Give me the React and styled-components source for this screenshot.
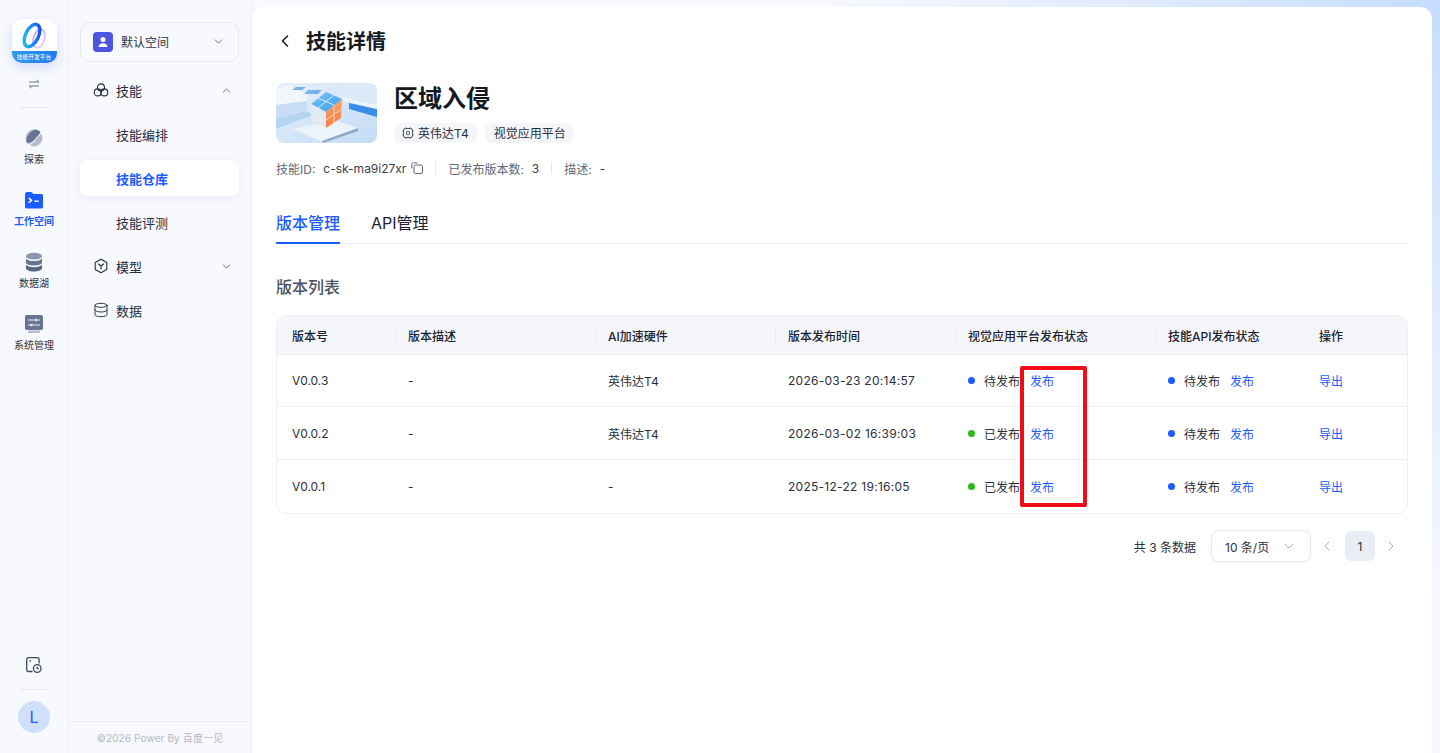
import React from 'react';
import styled, { createGlobalStyle } from 'styled-components';
import { LuChevronLeft, LuChevronDown, LuChevronUp, LuChevronRight, LuDatabase } from 'react-icons/lu';

const GlobalStyle = createGlobalStyle`
  html, body, #root { margin: 0; height: 100%; }
  body {
    font-family: Inter, "Noto Sans CJK SC", sans-serif;
    color: #1c2230;
    overflow: hidden;
    background: #f8f9fe;
  }
  * { box-sizing: border-box; }
`;

const Page = styled.div`
  display: flex;
  height: 753px;
  width: 1440px;
  background: radial-gradient(ellipse 620px 620px at 100% 0, #c6ddfe 0%, #d9e7fd 35%, #f8f9fe 100%);
`;

const Rail = styled.nav`
  width: 69px;
  flex: none;
  display: flex;
  flex-direction: column;
  align-items: center;
  padding: 19px 0 20px;
  background: #f8f9fe;
  border-right: 1px solid #eff0f6;
`;

const LogoBox = styled.div`
  width: 45px;
  height: 44px;
  border-radius: 10px;
  overflow: hidden;
  background: #fff;
  box-shadow: 0 4px 12px rgba(80, 110, 230, 0.22);
  display: flex;
  flex-direction: column;
`;

const LogoMark = styled.div`
  flex: 1;
  display: flex;
  svg { display: block; }
`;

const LogoCaption = styled.div`
  height: 12px;
  background: linear-gradient(90deg, #2f9bf0, #1f7bf2);
  color: #fff;
  font-size: 8px;
  line-height: 12px;
  text-align: center;
  white-space: nowrap;
  span { display: inline-block; transform: scale(0.72); transform-origin: center; margin: 0 -8px; }
`;

const SwitchIcon = styled.svg`
  margin-top: 15px;
  width: 12px;
  height: 12px;
  color: #6b7280;
`;

const RailRule = styled.div`
  width: 29px;
  height: 1px;
  background: #e5e7ef;
  margin-top: ${p => p.$top}px;
  flex: none;
`;

const RailItems = styled.div`
  margin-top: 20px;
  display: flex;
  flex-direction: column;
  gap: 19px;
  align-items: center;
`;

const RailItem = styled.div`
  width: 60px;
  height: 43px;
  display: flex;
  flex-direction: column;
  align-items: center;
  justify-content: flex-start;
  gap: 4px;
  font-size: 10px;
  line-height: 14px;
  font-weight: ${p => (p.$active ? 600 : 400)};
  color: ${p => (p.$active ? '#1a5cff' : '#2f3543')};
`;

const RailBottom = styled.div`
  margin-top: auto;
  display: flex;
  flex-direction: column;
  align-items: center;
`;

const Avatar = styled.div`
  width: 32px;
  height: 32px;
  border-radius: 50%;
  background: #d0dffb;
  color: #1a5cff;
  font-size: 16px;
  display: flex;
  align-items: center;
  justify-content: center;
  margin-top: 11px;
`;

const Side = styled.aside`
  width: 183px;
  flex: none;
  display: flex;
  flex-direction: column;
  background: #f8f9fe;
  border-right: 1px solid #eff0f6;
`;

const SideBody = styled.div`
  flex: 1;
  padding: 22px 12px 0 11px;
`;

const SpaceSelect = styled.div`
  height: 40px;
  border: 1px solid #e4e7f0;
  border-radius: 10px;
  display: flex;
  align-items: center;
  padding: 0 13px 1px;
  font-size: 12px;
  color: #2f3543;
  margin-bottom: 10px;
`;

const SpaceBadge = styled.div`
  width: 20px;
  height: 20px;
  border-radius: 4px;
  background: #4b55e0;
  margin-right: 8px;
  margin-left: -1px;
  display: flex;
  align-items: center;
  justify-content: center;
`;

const Caret = styled.span`
  margin-left: auto;
  display: flex;
  color: ${p => p.$color || '#4b5563'};
`;

const MenuItem = styled.div`
  height: 36px;
  margin-bottom: 8px;
  display: flex;
  align-items: center;
  border-radius: 8px;
  padding: 0 6px 0 13px;
  font-size: 13px;
  color: #262c3a;
  gap: 7px;
`;

const SubItem = styled(MenuItem)`
  padding-left: 36px;
  font-weight: ${p => (p.$active ? 600 : 400)};
  color: ${p => (p.$active ? '#1a5cff' : '#262c3a')};
  background: ${p => (p.$active ? '#fff' : 'transparent')};
  box-shadow: ${p => (p.$active ? '0 2px 8px rgba(90, 120, 220, 0.1)' : 'none')};
`;

const SideFoot = styled.div`
  height: 32px;
  border-top: 1px solid #e9ebf3;
  font-size: 10px;
  color: #b4b7c0;
  letter-spacing: 0.13px;
  display: flex;
  align-items: center;
  justify-content: center;
`;

const Main = styled.main`
  width: 1180px;
  margin: 7px 0 0 0;
  background: #fff;
  border-radius: 12px 12px 0 0;
  padding: 0 24px;
`;

const TitleRow = styled.div`
  height: 68px;
  display: flex;
  align-items: center;
  gap: 11px;
  padding-bottom: 1px;
  margin-left: -1px;
  font-size: 20px;
  font-weight: 600;
  color: #14181f;
`;

const SkillHead = styled.div`
  margin-top: 8px;
  display: flex;
  gap: 17px;
`;

const Thumb = styled.div`
  width: 101px;
  height: 60px;
  border-radius: 8px;
  overflow: hidden;
  flex: none;
  svg { display: block; }
`;

const SkillName = styled.h1`
  margin: 0;
  font-size: 24px;
  line-height: 32px;
  font-weight: 600;
  color: #14181f;
`;

const TagRow = styled.div`
  display: flex;
  gap: 8px;
  margin-top: 8px;
`;

const Tag = styled.span`
  height: 20px;
  padding: 0 8px 1px ${p => (p.$wide ? 9 : 8)}px;
  background: #f5f6fa;
  border-radius: 6px;
  font-size: 12px;
  display: flex;
  align-items: center;
  gap: 4px;
  color: #2a303d;
`;

const MetaRow = styled.div`
  margin-top: 17px;
  height: 16px;
  display: flex;
  align-items: center;
  font-size: 12px;
  color: #5f6675;
`;

const MetaValue = styled.span`
  color: #3a404d;
  margin-left: 8px;
`;

const CopyIcon = styled.svg`
  margin-left: 5px;
  color: #5f6675;
`;

const MetaDivider = styled.i`
  width: 1px;
  height: 12px;
  background: #e6e8ef;
  margin: 0 12px;
`;

const Tabs = styled.div`
  margin-top: 31px;
  display: flex;
  gap: 31px;
  border-bottom: 1px solid #eef0f5;
  height: 37px;
`;

const TabItem = styled.div`
  font-size: 16px;
  line-height: 24px;
  height: 37px;
  padding-top: 4px;
  font-weight: ${p => (p.$active ? 500 : 400)};
  color: ${p => (p.$active ? '#1a5cff' : '#1c2230')};
  border-bottom: 2px solid ${p => (p.$active ? '#1a5cff' : 'transparent')};
`;

const SectionTitle = styled.h2`
  margin: 31px 0 16px;
  font-size: 16px;
  line-height: 24px;
  font-weight: 500;
  color: #4a5160;
`;

const TableWrap = styled.div`
  position: relative;
  width: 1132px;
  border: 1px solid #eef0f5;
  border-radius: 10px;
  overflow: hidden;
`;

const Row = styled.div`
  display: grid;
  grid-template-columns: 119px 200px 180px 180px 200px 151px 100px;
  align-items: center;
  height: ${p => p.$h}px;
  font-size: 12px;
  color: #2a303d;
  border-bottom: 1px solid ${p => (p.$last ? 'transparent' : '#f0f1f6')};
`;

const HeadRow = styled(Row)`
  background: #f5f6fa;
  font-weight: 500;
  color: #1c2230;
  border-bottom-color: #eef0f5;
`;

const Cell = styled.div`
  padding-left: 12px;
  display: flex;
  align-items: center;
  position: relative;
  white-space: nowrap;
  &:first-child { padding-left: 15px; }
`;

const HeadCell = styled(Cell)`
  &:not(:first-child)::before {
    content: '';
    position: absolute;
    left: -1px;
    top: 50%;
    height: 14px;
    margin-top: -7px;
    width: 1px;
    background: #e7e9f0;
  }
  &:last-child::before { display: none; }
`;

const TimeText = styled.span`
  letter-spacing: 0.27px;
`;

const Dot = styled.i`
  width: 7px;
  height: 7px;
  border-radius: 50%;
  background: ${p => p.$color};
  margin-right: 9px;
  flex: none;
`;

const StatusText = styled.span`
  width: 47px;
  margin-right: -1px;
`;

const LinkText = styled.a`
  color: #1a5cff;
`;

const RedMark = styled.div`
  position: absolute;
  left: 743px;
  top: 50px;
  width: 67px;
  height: 141px;
  border: 4px solid #f00d18;
  border-radius: 2px;
`;

const Pager = styled.div`
  margin-top: 16px;
  display: flex;
  align-items: center;
  justify-content: flex-end;
  width: 1132px;
  font-size: 12px;
  color: #2a303d;
  padding-right: 2px;
`;

const PageSize = styled.div`
  width: 100px;
  height: 32px;
  margin-left: 15px;
  border: 1px solid #e6e9f1;
  border-radius: 8px;
  display: flex;
  align-items: center;
  padding: 0 13px;
  box-shadow: 0 1px 2px rgba(60, 80, 140, 0.06);
`;

const PageButton = styled.div`
  width: 30px;
  height: 30px;
  margin-left: ${p => p.$gap || 0}px;
  border-radius: 6px;
  background: ${p => (p.$current ? '#e9edf6' : 'transparent')};
  color: ${p => (p.$current ? '#2a303d' : '#a9aeb9')};
  display: flex;
  align-items: center;
  justify-content: center;
`;

const Planet = () => (
  <svg width="20" height="20" viewBox="0 0 20 20">
    <circle cx="10" cy="10" r="8.500" fill="#b6bccb" />
    <path d="M2.600 14.800C1.500 9.500 5.200 3 12 1.600c2 .4 3.600 1.500 4.700 3C16.600 9.600 9.500 15.500 2.600 14.800z" fill="#687592" />
    <path d="M.8 18.600C3.800 18.200 10.400 14.500 19.400 1.600" stroke="#f8f9fe" strokeWidth="1.100" fill="none" />
  </svg>
);

const Folder = () => (
  <svg width="20" height="20" viewBox="0 0 20 20">
    <path d="M1 4.200C1 3 1.900 2 3 2h4.400l2 2H17.400c.9 0 1.600.7 1.600 1.600v11.200c0 .9-.7 1.600-1.600 1.600H2.600C1.700 18.400 1 17.700 1 16.800z" fill="#1a5cff" />
    <path d="M4.600 8l3 2.400-3 2.400" stroke="#fff" strokeWidth="1.400" fill="none" strokeLinejoin="round" />
    <path d="M10.400 11.200h4.400" stroke="#fff" strokeWidth="1.400" />
  </svg>
);

const Lake = () => (
  <svg width="20" height="20" viewBox="0 0 20 20">
    <ellipse cx="10" cy="4.200" rx="8" ry="3.400" fill="#8c95ad" />
    <path d="M2 6.400c1.200 1.700 4.400 2.600 8 2.600s6.800-.9 8-2.600v4c0 1.800-3.600 3-8 3s-8-1.200-8-3z" fill="#687592" />
    <path d="M2 12.800c1.200 1.600 4.400 2.400 8 2.400s6.800-.8 8-2.400v3.400c0 1.800-3.600 3.200-8 3.200s-8-1.400-8-3.200z" fill="#596685" />
  </svg>
);

const SystemIcon = () => (
  <svg width="20" height="20" viewBox="0 0 20 20">
    <rect x="1" y="1" width="18" height="15" rx="1.800" fill="#687592" />
    <rect x="4" y="16.500" width="12" height="2.400" rx=".6" fill="#b6bccb" />
    <path d="M4 6h12M4 11h12" stroke="#e8ebf3" strokeWidth="1" />
    <rect x="11" y="4.800" width="2" height="2.400" fill="#e8ebf3" />
    <rect x="6.500" y="9.800" width="2" height="2.400" fill="#e8ebf3" />
  </svg>
);

const Logo = () => (
  <svg width="45" height="32" viewBox="0 0 45 32">
    <defs>
      <linearGradient id="ringA" x1="0" y1="1" x2="1" y2="0">
        <stop offset="0" stopColor="#25cbe6" />
        <stop offset="0.6" stopColor="#1b7df2" />
        <stop offset="1" stopColor="#1a3bf0" />
      </linearGradient>
      <linearGradient id="ringB" x1="0" y1="0" x2="1" y2="1">
        <stop offset="0" stopColor="#b7a4f4" />
        <stop offset="1" stopColor="#ecd0f6" />
      </linearGradient>
    </defs>
    <ellipse cx="27" cy="19.500" rx="5.500" ry="9.500" transform="rotate(16 27 19.500)" fill="none" stroke="url(#ringB)" strokeWidth="1.800" />
    <ellipse cx="20" cy="16.500" rx="6.500" ry="12" transform="rotate(26 20 16.500)" fill="none" stroke="url(#ringA)" strokeWidth="3.400" />
  </svg>
);

const CloudNodes = () => (
  <svg width="16" height="16" viewBox="0 0 16 16" fill="none" stroke="#262c3a" strokeWidth="1.100">
    <circle cx="8" cy="5.400" r="3.500" />
    <circle cx="4.700" cy="10.400" r="3.500" />
    <circle cx="11.300" cy="10.400" r="3.500" />
  </svg>
);

const ModelIcon = () => (
  <svg width="16" height="16" viewBox="0 0 16 16" fill="none" stroke="#262c3a" strokeWidth="1.100" strokeLinejoin="round">
    <path d="M8 1.300l5.800 3.300v6.800L8 14.700l-5.800-3.300V4.600z" />
    <path d="M5.200 5.800L8 8l2.800-2.200M8 8v3.400" />
  </svg>
);

const HistoryIcon = () => (
  <svg width="18" height="18" viewBox="0 0 18 18" fill="none" stroke="#3f4a63" strokeWidth="1.300">
    <path d="M7.500 15.500H3.200c-.9 0-1.500-.7-1.500-1.500V3.200c0-.8.6-1.500 1.500-1.500h9.400c.9 0 1.500.7 1.500 1.500v4.300" />
    <path d="M4.500 5h1.400" />
    <circle cx="12.200" cy="12.500" r="3.800" />
    <path d="M12.200 10.800v1.800h1.500" />
  </svg>
);

const ChipIcon = () => (
  <svg width="12" height="12" viewBox="0 0 12 12" fill="none" stroke="#4a5160" strokeWidth="1">
    <rect x="1.500" y="1.500" width="9" height="9" rx="1.600" />
    <rect x="4.500" y="4.500" width="3" height="3" rx=".6" />
    <path d="M4 .2v1M8 .2v1M4 10.800v1M8 10.800v1M.2 4h1M.2 8h1M10.800 4h1M10.800 8h1" strokeWidth=".8" />
  </svg>
);

const CubeScene = () => (
  <svg width="101" height="60" viewBox="0 0 101 60">
    <defs>
      <linearGradient id="sceneBg" x1="0" y1="0" x2="1" y2="1">
        <stop offset="0" stopColor="#e6effb" />
        <stop offset="1" stopColor="#c3dcf6" />
      </linearGradient>
      <linearGradient id="cubeTop" x1="0" y1="0" x2="1" y2="1">
        <stop offset="0" stopColor="#7ac3f4" />
        <stop offset="1" stopColor="#3a9ef0" />
      </linearGradient>
      <linearGradient id="cubeRight" x1="0" y1="0" x2="0" y2="1">
        <stop offset="0" stopColor="#f6a36c" />
        <stop offset="1" stopColor="#f47f45" />
      </linearGradient>
    </defs>
    <rect width="101" height="60" fill="url(#sceneBg)" />
    <path d="M0 6l12-4 19 9v7L0 22z" fill="#f2f6fc" />
    <path d="M0 22l31-4v10L0 36z" fill="#c9ddf4" />
    <path d="M0 36l31-8 6 4L0 46z" fill="#a8cdf0" opacity="0.75" />
    <path d="M66 0h35v22L66 14z" fill="#dbe9f8" />
    <path d="M73 20l28 6v8L73 26z" fill="#3b8de8" />
    <path d="M66 14l35 8v4L68 18z" fill="#eef4fb" />
    <path d="M20 4h10l-4 3H16zM32 7h14l-4 4H28z" fill="#79b1ec" />
    <path d="M17 46l42-9 23 8-36 14z" fill="#edf3fb" />
    <path d="M46 58l36-13v3L47 60z" fill="#8ea9c9" />
    <path d="M35 21l15-12 16 7-16 13z" fill="url(#cubeTop)" />
    <path d="M42 15l16 7M58 12L42 25" stroke="#dceefb" strokeWidth="1" />
    <path d="M50 29l16-13-1 19-15 10z" fill="url(#cubeRight)" />
    <path d="M58 22.500v18M50 37l15.500-11" stroke="#fcd9c1" strokeWidth=".9" />
    <path d="M35 21l15 8v16l-15-7z" fill="#e2e9f1" />
  </svg>
);

const rows = [
  { version: 'V0.0.3', hw: '英伟达T4', time: '2026-03-23 20:14:57', visual: '待发布', color: '#1a5cff', h: 52 },
  { version: 'V0.0.2', hw: '英伟达T4', time: '2026-03-02 16:39:03', visual: '已发布', color: '#2bb81e', h: 53 },
  { version: 'V0.0.1', hw: '-', time: '2025-12-22 19:16:05', visual: '已发布', color: '#2bb81e', h: 53, last: true },
];

const headers = ['版本号', '版本描述', 'AI加速硬件', '版本发布时间', '视觉应用平台发布状态', '技能API发布状态', '操作'];

export default function App() {
  return (
    <Page>
      <GlobalStyle />
      <Rail>
        <LogoBox>
          <LogoMark><Logo /></LogoMark>
          <LogoCaption><span>技能开发平台</span></LogoCaption>
        </LogoBox>
        <SwitchIcon viewBox="0 0 12 12" fill="none" stroke="currentColor" strokeWidth="1">
          <path d="M1 4h10L8.500 2M11 8H1l2.500 2" />
        </SwitchIcon>
        <RailRule $top={17} />
        <RailItems>
          <RailItem><Planet />探索</RailItem>
          <RailItem $active><Folder />工作空间</RailItem>
          <RailItem><Lake />数据湖</RailItem>
          <RailItem><SystemIcon />系统管理</RailItem>
        </RailItems>
        <RailBottom>
          <HistoryIcon />
          <RailRule $top={15} />
          <Avatar>L</Avatar>
        </RailBottom>
      </Rail>
      <Side>
        <SideBody>
          <SpaceSelect>
            <SpaceBadge>
              <svg width="12" height="12" viewBox="0 0 12 12" fill="#fff">
                <circle cx="6" cy="3.500" r="2.500" />
                <path d="M1.500 11c0-2.500 2-3.800 4.500-3.800s4.500 1.300 4.500 3.800z" />
              </svg>
            </SpaceBadge>
            默认空间
            <Caret><LuChevronDown size={13} strokeWidth={1.5} /></Caret>
          </SpaceSelect>
          <MenuItem><CloudNodes />技能<Caret><LuChevronUp size={13} strokeWidth={1.5} /></Caret></MenuItem>
          <SubItem>技能编排</SubItem>
          <SubItem $active>技能仓库</SubItem>
          <SubItem>技能评测</SubItem>
          <MenuItem><ModelIcon />模型<Caret><LuChevronDown size={13} strokeWidth={1.5} /></Caret></MenuItem>
          <MenuItem><LuDatabase size={16} strokeWidth={1.4} />数据</MenuItem>
        </SideBody>
        <SideFoot>©2026 Power By 百度一见</SideFoot>
      </Side>
      <Main>
        <TitleRow><LuChevronLeft size={20} strokeWidth={1.8} />技能详情</TitleRow>
        <SkillHead>
          <Thumb><CubeScene /></Thumb>
          <div>
            <SkillName>区域入侵</SkillName>
            <TagRow>
              <Tag><ChipIcon />英伟达T4</Tag>
              <Tag $wide>视觉应用平台</Tag>
            </TagRow>
          </div>
        </SkillHead>
        <MetaRow>
          技能ID:<MetaValue>c-sk-ma9i27xr</MetaValue>
          <CopyIcon width="12" height="12" viewBox="0 0 12 12" fill="none" stroke="currentColor" strokeWidth="1">
            <rect x="3" y="3" width="8.500" height="8.500" rx="1.500" />
            <path d="M.8 6.500V2.300C.8 1.400 1.400.8 2.300.8h4.200" />
          </CopyIcon>
          <MetaDivider />
          已发布版本数:<MetaValue>3</MetaValue>
          <MetaDivider />
          描述:<MetaValue>-</MetaValue>
        </MetaRow>
        <Tabs>
          <TabItem $active>版本管理</TabItem>
          <TabItem>API管理</TabItem>
        </Tabs>
        <SectionTitle>版本列表</SectionTitle>
        <TableWrap>
          <HeadRow $h={39}>
            {headers.map(h => <HeadCell key={h}>{h}</HeadCell>)}
          </HeadRow>
          {rows.map(r => (
            <Row key={r.version} $h={r.h} $last={r.last}>
              <Cell>{r.version}</Cell>
              <Cell>-</Cell>
              <Cell>{r.hw}</Cell>
              <Cell><TimeText>{r.time}</TimeText></Cell>
              <Cell><Dot $color={r.color} /><StatusText>{r.visual}</StatusText><LinkText>发布</LinkText></Cell>
              <Cell><Dot $color="#1a5cff" /><StatusText>待发布</StatusText><LinkText>发布</LinkText></Cell>
              <Cell><LinkText>导出</LinkText></Cell>
            </Row>
          ))}
          <RedMark />
        </TableWrap>
        <Pager>
          共 3 条数据
          <PageSize>10 条/页<Caret $color="#a9aeb9"><LuChevronDown size={16} strokeWidth={1.4} /></Caret></PageSize>
          <PageButton $gap={1}><LuChevronLeft size={16} strokeWidth={1.5} /></PageButton>
          <PageButton $current $gap={3}>1</PageButton>
          <PageButton $gap={1}><LuChevronRight size={16} strokeWidth={1.5} /></PageButton>
        </Pager>
      </Main>
    </Page>
  );
}
